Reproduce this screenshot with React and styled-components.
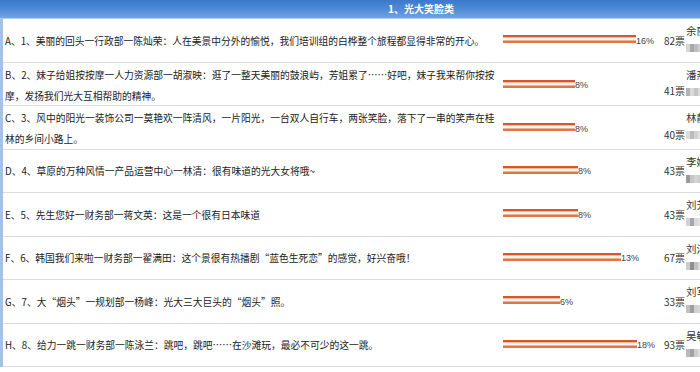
import React from "react";
import styled, { createGlobalStyle } from "styled-components";

const GlobalStyle = createGlobalStyle`
  html, body {
    margin: 0;
    padding: 0;
    background: #ffffff;
  }
  body {
    font-family: "Noto Sans CJK SC", "DejaVu Sans", sans-serif;
    color: #222222;
  }
`;

const ENTRIES = [
  {
    text: "A、1、美丽的回头一行政部一陈灿荣：人在美景中分外的愉悦，我们培训组的白桦整个旅程都显得非常的开心。",
    pct: "16%",
    bar: 133,
    votes: "82票",
    name: "余丽",
    shade: ["#d6d6d6", "#a8a8a8", "#bdbdbd", "#cfcfcf"]
  },
  {
    text: "B、2、妹子给姐按按摩一人力资源部一胡淑映：逛了一整天美丽的鼓浪屿，芳姐累了……好吧，妹子我来帮你按按摩，发扬我们光大互相帮助的精神。",
    pct: "8%",
    bar: 72,
    votes: "41票",
    name: "潘燕",
    wrapped: true,
    shade: ["#b4b4b4", "#dadada", "#c4c4c4", "#d8d8d8"]
  },
  {
    text: "C、3、风中的阳光一装饰公司一莫艳欢一阵清风，一片阳光，一台双人自行车，两张笑脸，落下了一串的笑声在桂林的乡间小路上。",
    pct: "8%",
    bar: 72,
    votes: "40票",
    name: "林静",
    wrapped: true,
    shade: ["#dcdcdc", "#bcbcbc", "#d2d2d2", "#e0e0e0"]
  },
  {
    text: "D、4、草原的万种风情一产品运营中心一林清：很有味道的光大女将哦~",
    pct: "8%",
    bar: 75,
    votes: "43票",
    name: "李娜",
    shade: ["#9a9a9a", "#c6c6c6", "#d4d4d4", "#cccccc"]
  },
  {
    text: "E、5、先生您好一财务部一蒋文英：这是一个很有日本味道",
    pct: "8%",
    bar: 75,
    votes: "43票",
    name: "刘芳",
    shade: ["#d2d2d2", "#a6a6a6", "#d8d8d8", "#e2e2e2"]
  },
  {
    text: "F、6、韩国我们来啦一财务部一翟满田：这个景很有热播剧“蓝色生死恋”的感觉，好兴奋哦！",
    pct: "13%",
    bar: 118,
    votes: "67票",
    name: "刘洋",
    shade: ["#cccccc", "#8e8e8e", "#c2c2c2", "#dadada"]
  },
  {
    text: "G、7、大“烟头”一规划部一杨峰：光大三大巨头的“烟头”照。",
    pct: "6%",
    bar: 57,
    votes: "33票",
    name: "刘军",
    shade: ["#c0c0c0", "#9e9e9e", "#d0d0d0", "#d6d6d6"]
  },
  {
    text: "H、8、给力一跳一财务部一陈泳兰：跳吧，跳吧……在沙滩玩，最必不可少的这一跳。",
    pct: "18%",
    bar: 134,
    votes: "93票",
    name: "吴敏",
    shade: ["#bababa", "#a2a2a2", "#cecece", "#dedede"]
  }
];

export default function App() {
  return (
    <>
      <GlobalStyle />
      <Viewport>
        <Table>
          <Header>1、光大笑脸类</Header>
          <Body>
            {ENTRIES.map((entry) => (
              <Row key={entry.text}>
                <Caption>{entry.text}</Caption>
                <BarCell>
                  <Bar style={{ width: entry.bar }} />
                  <Percent>{entry.pct}</Percent>
                </BarCell>
                <Votes wrapped={entry.wrapped}>{entry.votes}</Votes>
                <Voter>
                  <VoterName>{entry.name}</VoterName>
                  <Thumb>
                    {entry.shade.map((c, i) => (
                      <Pixel key={i} shade={c} />
                    ))}
                  </Thumb>
                </Voter>
              </Row>
            ))}
          </Body>
        </Table>
      </Viewport>
    </>
  );
}

const Viewport = styled.div`
  width: 700px;
  height: 372px;
  overflow: hidden;
`;

const Table = styled.div`
  width: 842px;
  display: flex;
  flex-direction: column;
`;

const Header = styled.div`
  height: 18px;
  border-bottom: 1px solid #b3cdee;
  background: linear-gradient(to bottom, #3c78cc 0%, #4f8ad6 50%, #72a4e0 100%);
  color: #ffffff;
  font-size: 10px;
  font-weight: bold;
  line-height: 18px;
  text-align: center;
`;

const Body = styled.div`
  border-left: 3px solid #a4c1ea;
  display: flex;
  flex-direction: column;
`;

const Row = styled.div`
  height: 43.5px;
  box-sizing: border-box;
  border-bottom: 1px solid #dcdcdc;
  display: grid;
  grid-template-columns: 497px 160px 25px 1fr;
  align-items: center;
`;

const Caption = styled.div`
  padding-left: 2px;
  padding-top: 2px;
  font-size: 9.76px;
  line-height: 21px;
  color: #222222;
`;

const BarCell = styled.div`
  display: flex;
  align-items: center;
  padding-left: 3px;
  margin-top: -2px;
`;

const Bar = styled.div`
  height: 8px;
  flex: none;
  background: linear-gradient(
    to bottom,
    #d5572b 0px,
    #d5572b 2px,
    #f3baa1 2px,
    #f3baa1 3px,
    #fff4ef 3px,
    #fff4ef 5px,
    #f1b195 5px,
    #f1b195 6px,
    #e07548 6px,
    #e07548 8px
  );
`;

const Percent = styled.span`
  font-family: "Liberation Sans", "DejaVu Sans", sans-serif;
  font-size: 9px;
  color: #444444;
  margin-top: 3px;
`;

const Votes = styled.div`
  text-align: right;
  font-size: 10px;
  color: #333333;
  padding-top: ${(p) => (p.wrapped ? "12px" : "0px")};
  white-space: nowrap;
`;

const Voter = styled.div`
  padding-left: 1px;
  display: flex;
  flex-direction: column;
  align-self: start;
  padding-top: 5px;
  gap: 6px;
`;

const VoterName = styled.div`
  font-size: 10.5px;
  line-height: 14px;
  color: #333333;
`;

const Thumb = styled.div`
  display: flex;
  height: 8px;
`;

const Pixel = styled.div`
  width: 4px;
  height: 8px;
  background: ${(p) => p.shade};
`;
